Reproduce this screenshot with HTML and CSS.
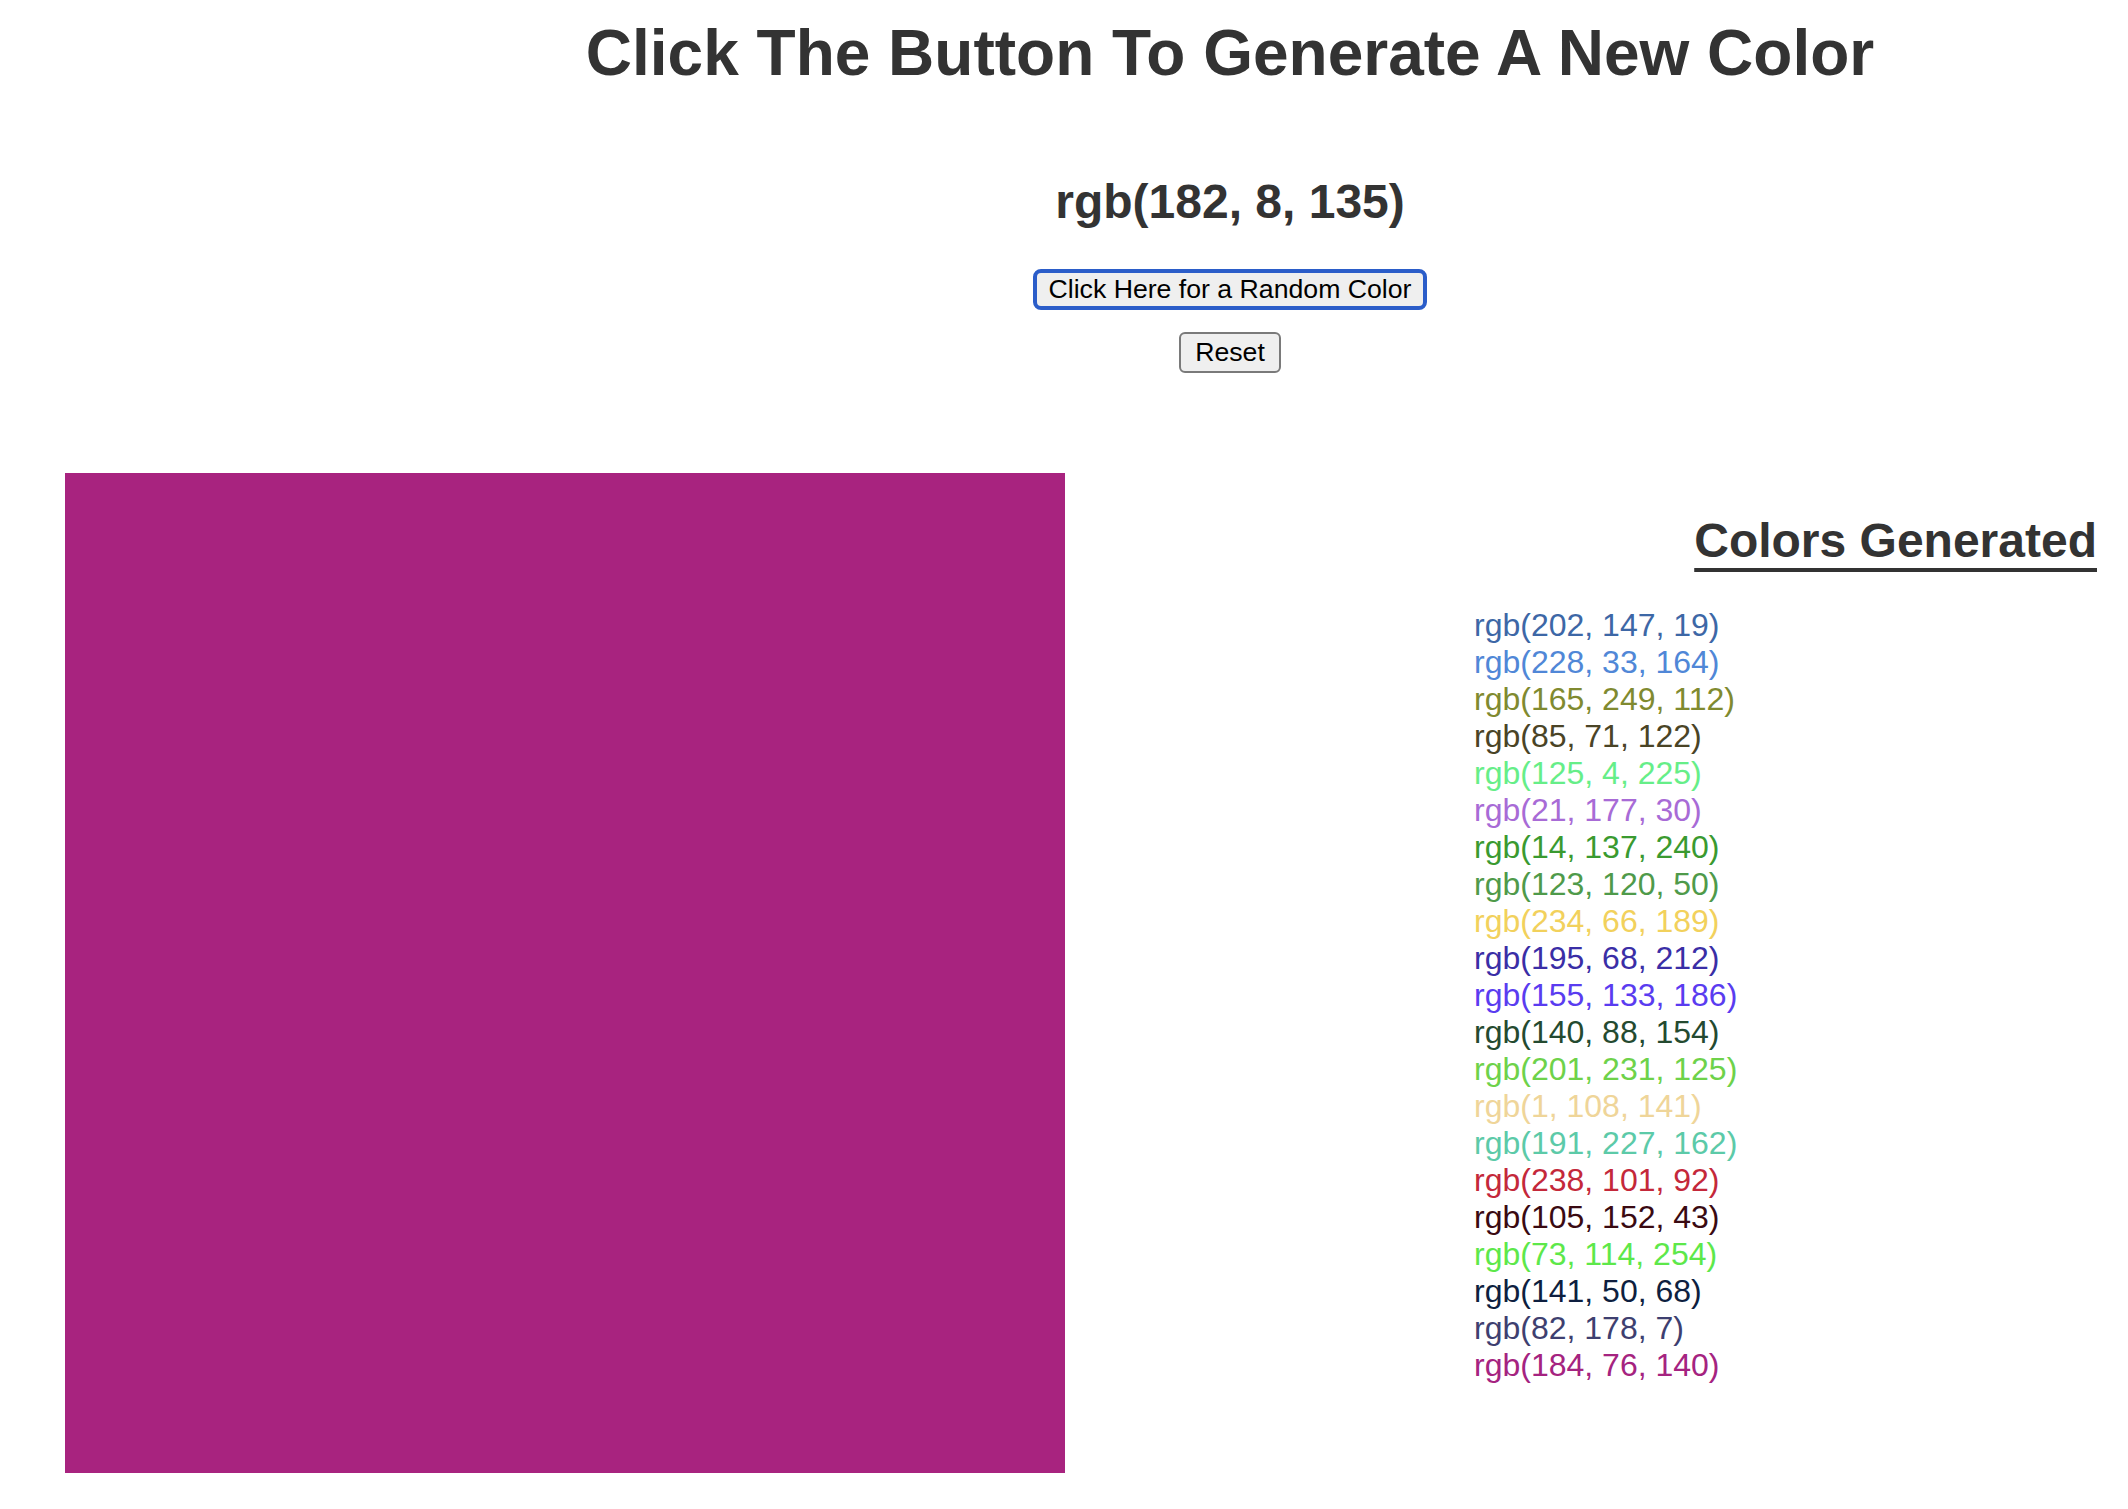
FILE: index.html
```html
<!DOCTYPE html>
<html lang="en">
<head>
<meta charset="utf-8">
<title>Random Color Generator</title>
<link rel="stylesheet" href="styles.css">
</head>
<body>
<header class="top">
  <h1 class="title">Click The Button To Generate A New Color</h1>
  <h2 class="current">rgb(182, 8, 135)</h2>
  <button class="btn btn-focus" type="button">Click Here for a Random Color</button>
  <button class="btn btn-reset" type="button">Reset</button>
</header>
<main class="main">
  <div class="swatch"></div>
  <section class="history">
    <h2 class="history-title">Colors Generated</h2>
    <ul class="history-list">
      <li style="color:#3d67a6">rgb(202, 147, 19)</li>
      <li style="color:#5087d7">rgb(228, 33, 164)</li>
      <li style="color:#808a30">rgb(165, 249, 112)</li>
      <li style="color:#4a4426">rgb(85, 71, 122)</li>
      <li style="color:#66ee88">rgb(125, 4, 225)</li>
      <li style="color:#a86bd6">rgb(21, 177, 30)</li>
      <li style="color:#3a9a30">rgb(14, 137, 240)</li>
      <li style="color:#4f9a4a">rgb(123, 120, 50)</li>
      <li style="color:#f2d15c">rgb(234, 66, 189)</li>
      <li style="color:#3a2ea6">rgb(195, 68, 212)</li>
      <li style="color:#5a3cf0">rgb(155, 133, 186)</li>
      <li style="color:#244a30">rgb(140, 88, 154)</li>
      <li style="color:#6ed24a">rgb(201, 231, 125)</li>
      <li style="color:#efd599">rgb(1, 108, 141)</li>
      <li style="color:#5ccaa8">rgb(191, 227, 162)</li>
      <li style="color:#c4283a">rgb(238, 101, 92)</li>
      <li style="color:#3a0a12">rgb(105, 152, 43)</li>
      <li style="color:#5de84a">rgb(73, 114, 254)</li>
      <li style="color:#0e1f40">rgb(141, 50, 68)</li>
      <li style="color:#3e3f70">rgb(82, 178, 7)</li>
      <li style="color:#a52380">rgb(184, 76, 140)</li>
    </ul>
  </section>
</main>
</body>
</html>
```

FILE: styles.css
```css
html, body {
  background: #ffffff;
}
body {
  margin: 16px;
  font-family: "Liberation Sans", Arial, Helvetica, sans-serif;
  color: #333333;
}
.top {
  display: flex;
  flex-direction: column;
  align-items: center;
  padding-left: 332px;
}
.title {
  margin: 0 0 84px;
  font-size: 64px;
  font-weight: bold;
  line-height: normal;
}
.current {
  margin: 0 0 40px;
  font-size: 48px;
  font-weight: bold;
  line-height: normal;
}
.btn {
  font-family: "Liberation Sans", Arial, Helvetica, sans-serif;
  font-size: 26.67px;
  line-height: 29px;
  color: #000000;
  background: #efefef;
  cursor: pointer;
}
.btn-focus {
  border: 4px solid #2b5dc9;
  border-radius: 8px;
  padding: 2px 12px;
}
.btn-reset {
  margin-top: 22px;
  border: 2px solid #7a7a7a;
  border-radius: 6px;
  padding: 4px 14px;
}
.main {
  display: flex;
  align-items: flex-start;
  margin-top: 100px;
}
.swatch {
  width: 1000px;
  height: 1000px;
  margin-left: 49px;
  background: #a8237f;
  flex: none;
}
.history {
  margin-left: 409px;
  width: 623px;
  flex: none;
}
.history-title {
  margin: 40px 0 39px;
  font-size: 48px;
  font-weight: bold;
  line-height: normal;
  text-align: right;
  text-decoration: underline;
  text-decoration-thickness: 4px;
  text-underline-offset: 11px;
}
.history-list {
  list-style: none;
  margin: 0;
  padding: 0;
  font-size: 32px;
  line-height: normal;
}
```
